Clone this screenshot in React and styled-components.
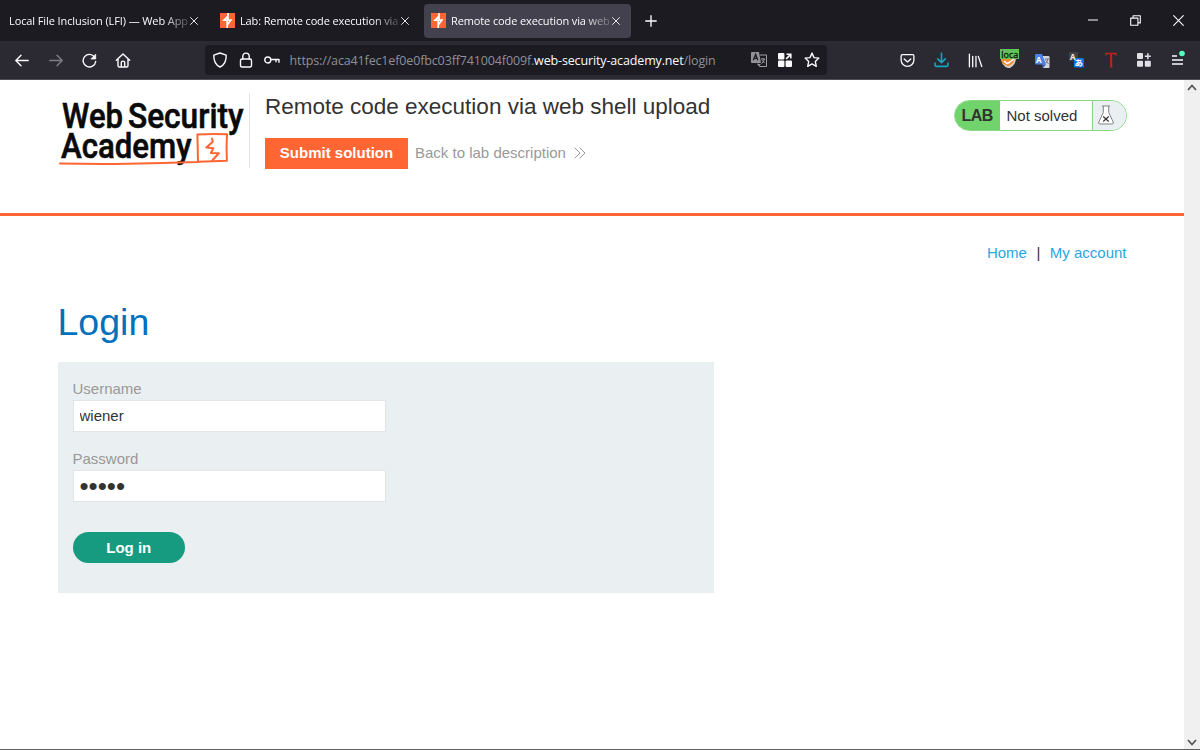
import React from 'react';
import styled, { createGlobalStyle } from 'styled-components';

const GlobalStyle = createGlobalStyle`
  * {
    box-sizing: border-box;
  }
  body {
    margin: 0;
    overflow: hidden;
    background: #fff;
    font-family: "Liberation Sans", Arial, sans-serif;
    color: #333332;
  }
  svg {
    display: block;
    flex: none;
  }
`;

const Window = styled.div`
  width: 1200px;
  height: 750px;
  display: flex;
  flex-direction: column;
  border-bottom: 1px solid #626264;
`;

const TabBar = styled.div`
  height: 41px;
  flex: none;
  display: flex;
  align-items: center;
  padding-left: 2px;
  background: #1c1b22;
  font-family: "Open Sans", "Noto Sans", sans-serif;
  color: #fbfbfe;
`;

const Tab = styled.div`
  width: 207px;
  height: 34px;
  margin-right: 4px;
  padding: 0 11px 0 7px;
  display: flex;
  align-items: center;
  border-radius: 4px;
  background: ${props => props.$active ? '#42414d' : 'transparent'};
`;

const TabTitle = styled.span`
  margin: 1px auto 0 ${props => props.$icon ? '5px' : '0'};
  white-space: nowrap;
  font-size: 11px;
  line-height: 20px;
  letter-spacing: ${props => props.$spacing};
  mask-image: linear-gradient(to left, rgba(0, 0, 0, 0.2), #000 26px);
`;

const NewTab = styled.div`
  width: 32px;
  display: flex;
  justify-content: center;
`;

const WindowButtons = styled.div`
  margin-left: auto;
  display: flex;
`;

const WindowButton = styled.div`
  width: 43px;
  display: flex;
  justify-content: center;
`;

const Toolbar = styled.div`
  height: 39px;
  flex: none;
  display: flex;
  align-items: center;
  padding: 0 5px;
  background: #2b2a33;
  border-bottom: 1px solid #504f54;
  color: #fbfbfe;
`;

const ToolButton = styled.div`
  width: 33.8px;
  display: flex;
  align-items: center;
  justify-content: center;
  opacity: ${props => props.$disabled ? 0.4 : 1};
`;

const UrlBar = styled.div`
  width: 622px;
  height: 30px;
  margin-left: 65px;
  padding: 0 2.5px 0 1.5px;
  display: flex;
  align-items: center;
  border-radius: 4px;
  background: #1c1b22;
`;

const UrlIcon = styled.div`
  width: 26.3px;
  display: flex;
  justify-content: center;
`;

const UrlText = styled.div`
  flex: 1;
  margin: 2px 0 0 4px;
  font-family: "Open Sans", "Noto Sans", sans-serif;
  font-size: 12.5px;
  line-height: 20px;
  letter-spacing: -0.14px;
  white-space: nowrap;
  color: #8f8f96;
`;

const Domain = styled.span`
  color: #fbfbfe;
`;

const Extensions = styled.div`
  margin-left: auto;
  display: flex;
  align-items: center;
`;

const Viewport = styled.div`
  flex: 1;
  display: flex;
`;

const Page = styled.main`
  flex: 1;
`;

const ScrollBar = styled.div`
  width: 16px;
  padding: 4px 0 3px;
  display: flex;
  flex-direction: column;
  align-items: center;
  justify-content: space-between;
  background: #f0f0f0;
`;

const LabHeader = styled.header`
  height: 136px;
  padding: 13px 57.5px 0 57px;
  display: flex;
  align-items: flex-start;
  border-bottom: 3px solid #ff6633;
`;

const LogoBox = styled.div`
  width: 193px;
  height: 75px;
  border-right: 1px solid #e5e5e8;
`;

const LabInfo = styled.div`
  margin-left: 15px;
`;

const LabTitle = styled.h2`
  margin: 0;
  font-size: 22.5px;
  font-weight: 400;
  line-height: 28px;
  white-space: nowrap;
`;

const LabActions = styled.div`
  margin-top: 17px;
  display: flex;
  align-items: center;
`;

const SubmitButton = styled.a`
  width: 143px;
  height: 31px;
  line-height: 30px;
  text-align: center;
  background: #ff6633;
  color: #fff;
  font-size: 15px;
  font-weight: 700;
`;

const BackLink = styled.a`
  margin: -2px 0 0 7px;
  display: flex;
  align-items: center;
  gap: 8px;
  color: #999;
  font-size: 15px;
`;

const LabStatus = styled.div`
  width: 173px;
  height: 31px;
  margin: 7px 0 0 auto;
  display: flex;
  overflow: hidden;
  border: 1px solid #85d87f;
  border-radius: 16px;
  font-size: 15px;
  line-height: 29px;
`;

const LabBadge = styled.span`
  width: 45px;
  padding-left: 7px;
  background: #70d36b;
  font-size: 16px;
  font-weight: 700;
  letter-spacing: -0.6px;
`;

const LabState = styled.span`
  width: 92px;
  padding-left: 7px;
`;

const FlaskBox = styled.span`
  flex: 1;
  padding: 4px 0 0 5px;
  border-left: 1px solid #85d87f;
  background: #eaeff2;
`;

const Container = styled.section`
  padding: 0 57.5px;
`;

const AccountNav = styled.nav`
  padding-top: 27px;
  display: flex;
  justify-content: flex-end;
  gap: 9.5px;
  font-size: 15px;
  line-height: 20px;
`;

const NavLink = styled.a`
  color: #29a7df;
`;

const Heading = styled.h1`
  margin: 35px 0 0;
  font-size: 37.5px;
  font-weight: 400;
  line-height: 48px;
  color: #0071bc;
`;

const LoginForm = styled.form`
  width: 656.5px;
  height: 231px;
  margin-top: 16px;
  padding: 17px 15px 0;
  background: #eaeff2;
`;

const Label = styled.label`
  display: block;
  font-size: 15px;
  line-height: 20px;
  color: #999;
`;

const Input = styled.input`
  display: block;
  width: 313px;
  height: 32px;
  margin: 1px 0 17px;
  padding: 0 6px ${props => props.type === 'password' ? '0' : '2px'};
  border: 1px solid #e2e5e6;
  background: #fff;
  color: #333332;
  font-family: inherit;
  font-size: ${props => props.type === 'password' ? '26px' : '15px'};
  outline: none;
`;

const LoginButton = styled.button`
  width: 112.5px;
  height: 31px;
  margin-top: 13px;
  padding: 0 0 1px;
  border: 0;
  border-radius: 16px;
  background: #169b80;
  color: #fff;
  font-family: inherit;
  font-size: 15px;
  font-weight: 700;
`;

// 16px outline glyph used all over the browser chrome
const Icon = ({ size = 16, width = 1.4, color = '#fbfbfe', children }) => (
  <svg width={size} height={size} viewBox="0 0 16 16" fill="none" stroke={color} strokeWidth={width} strokeLinecap="round" strokeLinejoin="round">
    {children}
  </svg>
);

const CloseIcon = () => (
  <Icon size={8} width={1.8}><path d="M1 1l14 14M15 1L1 15" /></Icon>
);

const BurpIcon = () => (
  <svg width="15" height="15" viewBox="0 0 15 15">
    <path fill="#ff6633" d="M0 0h15v15H0z" />
    <path fill="none" stroke="#fff" strokeWidth="1.7" d="M8 0v3L4 7.2h6.8L7.2 12v3M8 3v4M7.2 7.5V12" />
  </svg>
);

const Logo = () => (
  <svg width="192" height="75" viewBox="57 93 192 75">
    <g fill="#0a0a0a" stroke="#0a0a0a" strokeWidth="0.6" fontFamily="Roboto, sans-serif" fontWeight="500">
      <text x="62" y="127.6" fontSize="34.5" textLength="61" lengthAdjust="spacingAndGlyphs">Web</text>
      <text x="128" y="127.6" fontSize="34.5" textLength="115.5" lengthAdjust="spacingAndGlyphs">Security</text>
      <text x="61" y="158.3" fontSize="34.5" textLength="130.5" lengthAdjust="spacingAndGlyphs">Academy</text>
    </g>
    <g fill="none" stroke="#ff6633" strokeWidth="2" strokeLinejoin="round" strokeLinecap="round">
      <path d="M60 163.5q34 .8 68 .3t70-1.7l-.6-27.6q14-1 29.6-.3-.9 13-.1 26.5-13 .5-28.5 1" />
      <path d="M212 138.5l.8 3.2-6.5 5.8 7 .8-2.4 4.7 8 .2-6.7 7.3" />
    </g>
  </svg>
);

const tabs = [
  { title: 'Local File Inclusion (LFI) — Web App', spacing: '-0.1px' },
  { title: 'Lab: Remote code execution via', icon: true, spacing: '-0.13px' },
  { title: 'Remote code execution via web', icon: true, active: true, spacing: '-0.12px' },
];

const BrowserTabs = () => (
  <TabBar>
    {tabs.map(tab => (
      <Tab key={tab.title} $active={tab.active}>
        {tab.icon && <BurpIcon />}
        <TabTitle $icon={tab.icon} $spacing={tab.spacing}>{tab.title}</TabTitle>
        <CloseIcon />
      </Tab>
    ))}
    <NewTab><Icon size={12} width={1.8}><path d="M8 1v14M1 8h14" /></Icon></NewTab>
    <WindowButtons>
      <WindowButton><Icon size={10} width={1.6}><path d="M0 8h16" /></Icon></WindowButton>
      <WindowButton><Icon size={11} width={1.6}><path d="M1 4.5h10.5V15H1zM4.5 4V1H15v10.5h-3" /></Icon></WindowButton>
      <WindowButton><Icon size={11} width={1.6}><path d="M1 1l14 14M15 1L1 15" /></Icon></WindowButton>
    </WindowButtons>
  </TabBar>
);

const BrowserToolbar = () => (
  <Toolbar>
    <ToolButton><Icon><path d="M14.2 8.5H1.8M7 3.3L1.8 8.5 7 13.7" /></Icon></ToolButton>
    <ToolButton $disabled><Icon><path d="M1.8 8.5h12.4M9 3.3l5.2 5.2L9 13.7" /></Icon></ToolButton>
    <ToolButton>
      <Icon><path d="M13.7 5.2a6.3 6.3 0 1 0 1 4.3" /><path fill="#fbfbfe" d="M14.7 2.5V7h-4.5z" strokeWidth=".8" /></Icon>
    </ToolButton>
    <ToolButton>
      <Icon><path d="M1.3 8.3L8 2l6.7 6.3M3 7v6.5Q3 15 4.5 15h7q1.5 0 1.5-1.5V7M6.3 14.7v-4.2q0-1.4 1.7-1.4t1.7 1.4v4.2" /></Icon>
    </ToolButton>
    <UrlBar>
      <UrlIcon><Icon><path d="M8 1L1.8 3.2C1.6 9 3 12.6 8 15c5-2.4 6.4-6 6.2-11.8z" /></Icon></UrlIcon>
      <UrlIcon><Icon><rect x="2.5" y="7" width="11" height="8" rx="1.5" /><path d="M4.8 7V4.3a3.2 3.2 0 0 1 6.4 0V7" /></Icon></UrlIcon>
      <UrlIcon><Icon><circle cx="3.8" cy="8" r="3" /><path d="M7 7.5h8v2.7M12 7.5v2.2" /></Icon></UrlIcon>
      <UrlText>https://aca41fec1ef0e0fbc03ff741004f009f.<Domain>web-security-academy.net</Domain>/login</UrlText>
      <UrlIcon>
        <svg width="16" height="16" viewBox="0 0 16 16">
          <path fill="#929296" d="M1 0h7l2 11H1q-1 0-1-1V1q0-1 1-1zM6 12h4l-2 2z" />
          <path fill="none" stroke="#a0a0a4" d="M9 3h6.5v11.5H8.5L7 11.5" />
          <path fill="none" stroke="#1c1b22" strokeWidth="1.3" d="M2.3 8.3L4.6 2.4l2.2 5.9M3 6.4h3.2" />
          <path fill="none" stroke="#a0a0a4" d="M10 7h4M12 6v1M13.5 7q-.6 2.7-3 4.6M11 8.2l2.6 2.8" />
        </svg>
      </UrlIcon>
      <UrlIcon>
        <svg width="14" height="14" viewBox="0 0 14 14" fill="#fbfbfe">
          <rect width="6.4" height="6.4" rx="1" /><rect y="7.6" width="6.4" height="6.4" rx="1" />
          <rect x="7.6" y="7.6" width="6.4" height="6.4" rx="1" />
          <path d="M8.5.4h5.1v5.1h-1.5v-2.3L8.8 6.4 7.6 5.2l3.3-3.3H8.5z" />
        </svg>
      </UrlIcon>
      <UrlIcon><Icon><path d="M8 1.1l2 4.5 4.9.5-3.6 3.3 1 4.9L8 11.9l-4.3 2.4 1-4.9L1.1 6.1 6 5.6z" /></Icon></UrlIcon>
    </UrlBar>
    <Extensions>
      <ToolButton><Icon size={15}><path d="M2.5 1.8h11q1.3 0 1.3 1.3v4.4a6.8 6.8 0 0 1-13.6 0V3.1q0-1.3 1.3-1.3zM4.5 6.3L8 9.5l3.5-3.2" /></Icon></ToolButton>
      <ToolButton><Icon color="#13a7bd" width={1.6}><path d="M7.5 1.2v9.2M3.7 6.9l3.8 3.7 3.8-3.7M1 11v1.6q0 1.8 1.8 1.8h9.4q1.8 0 1.8-1.8V11" /></Icon></ToolButton>
      <ToolButton><Icon size={15}><path d="M1.5 1.3v13.4M5 3.5v11.2M8.5 3.5v11.2M11 3.6l3.7 10.8" /></Icon></ToolButton>
      <ToolButton>
        <svg width="20" height="24" viewBox="-1 -1 20 24">
          <path fill="#d4cfc9" d="M1 8h15q0 8-6 11H8Q1 17 1 8z" />
          <path fill="#ef8c31" d="M1 9h14l-2 5-4 3H7l-5-3z" />
          <path fill="none" stroke="#fff" strokeWidth="1.5" d="M4 12l3 2.5 2-1 5-3.5" />
          <path fill="#5fc25d" d="M0 0h19v10H0z" />
          <text x="1.3" y="8.5" fontFamily="Open Sans, sans-serif" fontSize="9" fill="#102010" stroke="#102010" strokeWidth=".3">loca</text>
        </svg>
      </ToolButton>
      <ToolButton>
        <svg width="15" height="15" viewBox="0 0 15 15">
          <path fill="#d3d5d8" d="M6 3h7.5q1 0 1 1v10q0 1-1 1H8z" />
          <path fill="#4c7fe9" d="M1 1h6l4 10.5H1q-1 0-1-1V2q0-1 1-1z" />
          <path fill="#3456af" d="M7 11.5h4L8 15z" />
          <text x="1" y="9.5" fontFamily="Open Sans, sans-serif" fontSize="8" fontWeight="700" fill="#fff">A</text>
          <path fill="none" stroke="#66727e" d="M10 6h4M12.8 6q-.3 3-2.5 4M10.5 7.3l3 3.7" />
        </svg>
      </ToolButton>
      <ToolButton>
        <svg width="15" height="16" viewBox="0 0 15 16">
          <rect width="9" height="9" rx="1" fill="#424246" />
          <rect x="5" y="6" width="10" height="9.5" rx="1.2" fill="#0873e8" />
          <text x="1" y="7.5" fontFamily="Open Sans, sans-serif" fontSize="8" fontWeight="700" fill="#eee">A</text>
          <text x="5.6" y="14" fontFamily="Noto Sans CJK JP, sans-serif" fontSize="8.5" fontWeight="700" fill="#fff">あ</text>
        </svg>
      </ToolButton>
      <ToolButton>
        <svg width="12" height="16" viewBox="0 0 12 16">
          <path fill="#b62518" d="M0 .8h12L11.3 4Q10 2 7.2 2v12.5l1 1H4l1-1V2Q2 2 .5 4z" />
        </svg>
      </ToolButton>
      <ToolButton>
        <svg width="14" height="14" viewBox="0 0 14 14" fill="#e1e1e5">
          <rect width="6" height="6" rx="1" /><rect y="7.8" width="6" height="6" rx="1" />
          <rect x="7.8" y="7.8" width="6" height="6" rx="1" />
          <path d="M10.1.3h1.5v2.2h2.2V4h-2.2v2.2h-1.5V4H7.8V2.5h2.3z" />
        </svg>
      </ToolButton>
      <ToolButton>
        <svg width="16" height="20" viewBox="0 0 16 20" fill="none" stroke="#fbfbfe" strokeWidth="1.3">
          <path d="M2 6h5M2 10h11M2 14h11" />
          <circle cx="12" cy="3.5" r="2.8" fill="#54ffbd" stroke="none" />
        </svg>
      </ToolButton>
    </Extensions>
  </Toolbar>
);

const ScrollArrow = ({ d }) => (
  <svg width="10" height="7" viewBox="0 0 10 7"><path d={d} fill="none" stroke="#55555a" strokeWidth="1.8" /></svg>
);

const LabBanner = () => (
  <LabHeader>
    <LogoBox><Logo /></LogoBox>
    <LabInfo>
      <LabTitle>Remote code execution via web shell upload</LabTitle>
      <LabActions>
        <SubmitButton>Submit solution</SubmitButton>
        <BackLink>
          Back to lab description
          <svg width="12" height="12" viewBox="0 0 12 12" fill="none" stroke="#999"><path d="M.7.7L6 6 .7 11.3M5.7.7L11 6l-5.3 5.3" /></svg>
        </BackLink>
      </LabActions>
    </LabInfo>
    <LabStatus>
      <LabBadge>LAB</LabBadge>
      <LabState>Not solved</LabState>
      <FlaskBox>
        <svg width="16" height="20" viewBox="0 0 16 20" fill="none" stroke="#808284">
          <path fill="#fff" d="M5.3 1v6.5L.8 17q-.7 2 1.2 2h12q1.9 0 1.2-2l-4.5-9.5V1M4 1h8" />
          <path stroke="#333" strokeWidth="1.2" d="M5.2 11.5l5.5 5M10.7 11.5l-5.5 5" />
        </svg>
      </FlaskBox>
    </LabStatus>
  </LabHeader>
);

const App = () => {
  return (
    <Window>
      <GlobalStyle />
      <BrowserTabs />
      <BrowserToolbar />
      <Viewport>
        <Page>
          <LabBanner />
          <Container>
            <AccountNav>
              <NavLink>Home</NavLink>
              <span>|</span>
              <NavLink>My account</NavLink>
            </AccountNav>
            <Heading>Login</Heading>
            <LoginForm>
              <Label>Username</Label>
              <Input defaultValue="wiener" />
              <Label>Password</Label>
              <Input type="password" defaultValue="peter" />
              <LoginButton type="button">Log in</LoginButton>
            </LoginForm>
          </Container>
        </Page>
        <ScrollBar>
          <ScrollArrow d="M1 6l4-4.5L9 6" />
          <ScrollArrow d="M1 1l4 4.5L9 1" />
        </ScrollBar>
      </Viewport>
    </Window>
  );
};

export default App;
